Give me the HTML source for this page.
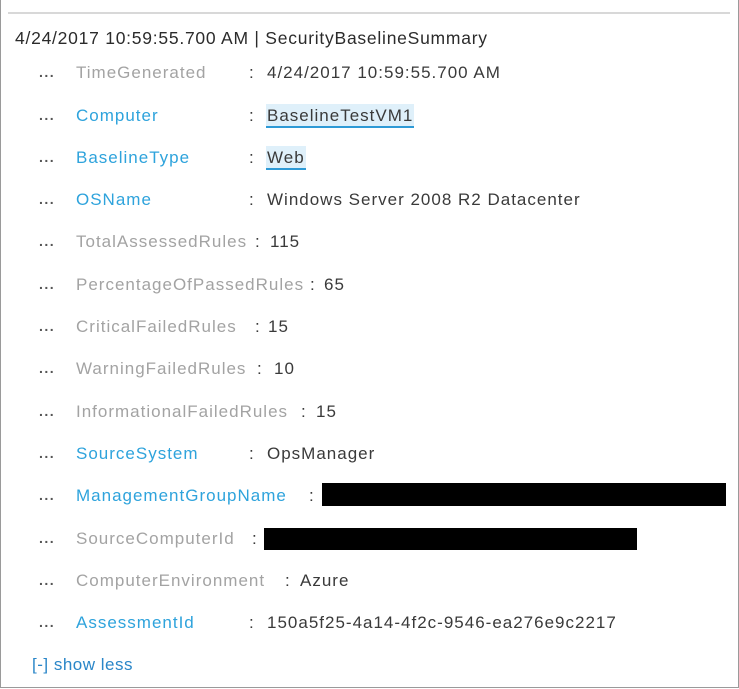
<!DOCTYPE html>
<html><head><meta charset="utf-8"><style>
body{margin:0;width:739px;height:689px;background:#fff;position:relative;overflow:hidden;font-family:"Segoe UI","Liberation Sans",sans-serif;}
.frame{position:absolute;left:0;top:0;width:737px;height:687px;border:1px solid #9a9a9a;border-top:none;}
.topline{position:absolute;left:8px;top:12px;width:722px;height:2px;background:#d8d8d8;}
.hdr{position:absolute;left:15px;top:28px;font-size:17.5px;color:#2b2b2b;white-space:nowrap;letter-spacing:0.75px;}
.r{position:absolute;font-size:17px;white-space:nowrap;line-height:22px;letter-spacing:1px;}
.d{position:absolute;left:39px;font-size:14px;font-weight:bold;color:#555;letter-spacing:1.5px;}
.g{color:#a3a3a3}.b{color:#2ea3dc}.v{color:#3a3a3a}
.hl{background:#dff0fa;border-bottom:2px solid #2e9ad6;padding:2px 1px 1px 1px;}
.blk{position:absolute;background:#000;}
</style></head><body>
<div class="frame"></div>
<div class="topline"></div>
<div class="hdr">4/24/2017 10:59:55.700 AM | SecurityBaselineSummary</div>

<div class="d" style="top:64px">...</div><div class="r g" style="left:76px;top:62px">TimeGenerated</div><div class="r v" style="left:249px;top:62px">:</div><div class="r v" style="left:267px;top:62px">4/24/2017 10:59:55.700 AM</div>

<div class="d" style="top:107px">...</div><div class="r b" style="left:76px;top:105px">Computer</div><div class="r v" style="left:249px;top:105px">:</div><div class="r v" style="left:266px;top:105px"><span class="hl">BaselineTestVM1</span></div>

<div class="d" style="top:149px">...</div><div class="r b" style="left:76px;top:147px">BaselineType</div><div class="r v" style="left:249px;top:147px">:</div><div class="r v" style="left:266px;top:147px"><span class="hl">Web</span></div>

<div class="d" style="top:191px">...</div><div class="r b" style="left:76px;top:189px">OSName</div><div class="r v" style="left:249px;top:189px">:</div><div class="r v" style="left:267px;top:189px">Windows Server 2008 R2 Datacenter</div>

<div class="d" style="top:233px">...</div><div class="r g" style="left:76px;top:231px">TotalAssessedRules</div><div class="r v" style="left:255px;top:231px">:</div><div class="r v" style="left:270px;top:231px">115</div>

<div class="d" style="top:276px">...</div><div class="r g" style="left:76px;top:274px">PercentageOfPassedRules</div><div class="r v" style="left:310px;top:274px">:</div><div class="r v" style="left:324px;top:274px">65</div>

<div class="d" style="top:318px">...</div><div class="r g" style="left:76px;top:316px">CriticalFailedRules</div><div class="r v" style="left:255px;top:316px">:</div><div class="r v" style="left:268px;top:316px">15</div>

<div class="d" style="top:360px">...</div><div class="r g" style="left:76px;top:358px">WarningFailedRules</div><div class="r v" style="left:257px;top:358px">:</div><div class="r v" style="left:274px;top:358px">10</div>

<div class="d" style="top:403px">...</div><div class="r g" style="left:76px;top:401px">InformationalFailedRules</div><div class="r v" style="left:301px;top:401px">:</div><div class="r v" style="left:316px;top:401px">15</div>

<div class="d" style="top:445px">...</div><div class="r b" style="left:76px;top:443px">SourceSystem</div><div class="r v" style="left:249px;top:443px">:</div><div class="r v" style="left:267px;top:443px">OpsManager</div>

<div class="d" style="top:487px">...</div><div class="r b" style="left:76px;top:485px">ManagementGroupName</div><div class="r v" style="left:309px;top:485px">:</div><div class="blk" style="left:322px;top:483px;width:404px;height:23px"></div>

<div class="d" style="top:530px">...</div><div class="r g" style="left:76px;top:528px">SourceComputerId</div><div class="r v" style="left:252px;top:528px">:</div><div class="blk" style="left:264px;top:528px;width:373px;height:22px"></div>

<div class="d" style="top:572px">...</div><div class="r g" style="left:76px;top:570px">ComputerEnvironment</div><div class="r v" style="left:285px;top:570px">:</div><div class="r v" style="left:300px;top:570px">Azure</div>

<div class="d" style="top:614px">...</div><div class="r b" style="left:76px;top:612px">AssessmentId</div><div class="r v" style="left:249px;top:612px">:</div><div class="r v" style="left:267px;top:612px">150a5f25-4a14-4f2c-9546-ea276e9c2217</div>

<div class="r" style="left:32px;top:654px;color:#2a86c8;letter-spacing:0.5px">[-] show less</div>
</body></html>
